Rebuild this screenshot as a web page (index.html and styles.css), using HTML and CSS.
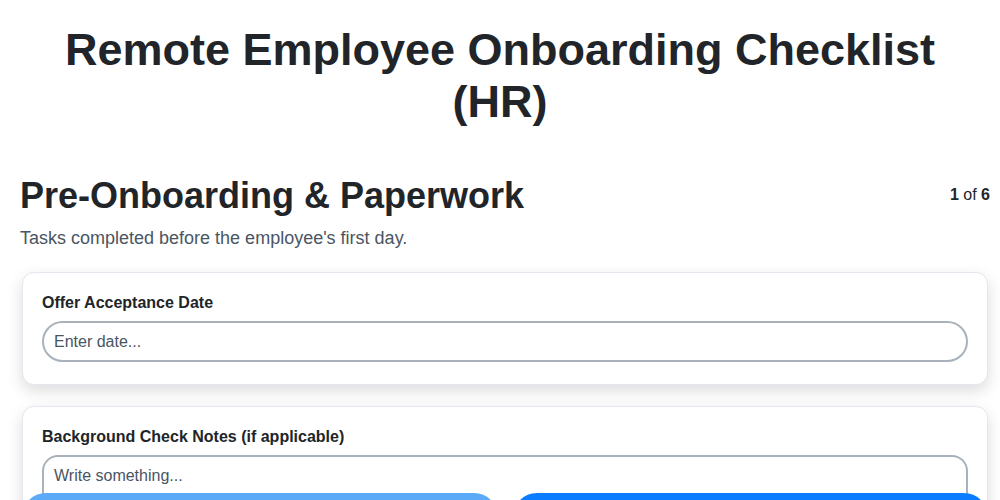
FILE: index.html
```html
<!DOCTYPE html>
<html lang="en">
<head>
<meta charset="utf-8">
<title>Remote Employee Onboarding Checklist (HR)</title>
<link rel="stylesheet" href="styles.css">
</head>
<body>
<main class="page">
  <h1 class="page-title">Remote Employee Onboarding Checklist (HR)</h1>
  <section class="step">
    <header class="step-head">
      <h2 class="step-title">Pre-Onboarding &amp; Paperwork</h2>
      <div class="step-count"><b>1</b> of <b>6</b></div>
    </header>
    <p class="step-desc">Tasks completed before the employee's first day.</p>
    <div class="card">
      <label class="field-label" for="f1">Offer Acceptance Date</label>
      <input class="field-input" id="f1" type="text" placeholder="Enter date...">
    </div>
    <div class="card">
      <label class="field-label" for="f2">Background Check Notes (if applicable)</label>
      <textarea class="field-area" id="f2" placeholder="Write something..."></textarea>
    </div>
  </section>
</main>
<nav class="nav-bar">
  <button class="btn btn-prev" type="button">Previous</button>
  <button class="btn btn-next" type="button">Next</button>
</nav>
</body>
</html>
```
FILE: styles.css
```css
* { box-sizing: border-box; }
html, body { margin: 0; padding: 0; background: #ffffff; }
body {
  font-family: "Liberation Sans", Arial, sans-serif;
  color: #212529;
}
.page-title {
  max-width: 900px;
  margin: 24px auto 0;
  font-size: 45px;
  line-height: 52px;
  font-weight: 700;
  text-align: center;
  color: #212529;
}
.step {
  margin-top: 46px;
  padding: 0 10px 0 20px;
}
.step-head {
  display: flex;
  justify-content: space-between;
  align-items: center;
}
.step-title {
  margin: 0;
  font-size: 36px;
  line-height: 44px;
  font-weight: 700;
}
.step-count {
  font-size: 16px;
  line-height: 20px;
  margin-bottom: 2px;
  color: #212529;
}
.step-desc {
  margin: 8px 0 22px;
  font-size: 18px;
  line-height: 24px;
  color: #4a5563;
}
.card {
  margin: 0 2px 21px;
  padding: 20px 19px 22px;
  background: #fff;
  border: 1px solid #e6e6ee;
  border-radius: 12px;
  box-shadow: 0 6px 16px rgba(0, 0, 0, 0.14);
}
.field-label {
  display: block;
  font-size: 16px;
  font-weight: 700;
  line-height: 20px;
  margin-bottom: 8px;
  color: #212529;
}
.field-input, .field-area {
  display: block;
  width: 100%;
  font-family: inherit;
  font-size: 16px;
  color: #212529;
  border: 2px solid #a9b1ba;
  background: #fff;
}
.field-input {
  height: 41px;
  padding: 0 10px;
  border-radius: 21px;
}
.field-area {
  height: 100px;
  padding: 10px 10px;
  border-radius: 16px;
  resize: none;
}
.field-input::placeholder, .field-area::placeholder { color: #4a5563; opacity: 1; }
.nav-bar {
  position: fixed;
  left: 22px;
  right: 12px;
  top: 493px;
  display: flex;
  gap: 15px;
}
.btn {
  flex: 1;
  height: 48px;
  border: none;
  border-radius: 24px;
  color: #fff;
  font-family: inherit;
  font-size: 16px;
  font-weight: 700;
}
.btn-prev { background: #5aaaf8; }
.btn-next { background: #0a7cff; }
```
